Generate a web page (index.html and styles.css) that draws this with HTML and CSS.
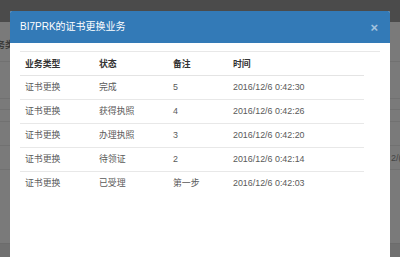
FILE: index.html
```html
<!DOCTYPE html>
<html lang="zh">
<head>
<meta charset="utf-8">
<link rel="stylesheet" href="styles.css">
</head>
<body>
<div class="page">
  <div class="topbar"></div>
  <div class="bg-content">
    <div class="bg-row bg-head"><span class="bg-left">务类</span></div>
    <div class="bg-row r37"></div>
    <div class="bg-row r11"></div>
    <div class="bg-row r12"></div>
    <div class="bg-row r24"></div>
    <div class="bg-row r24"><span class="bg-right">2/(</span></div>
    <div class="bg-fill"></div>
    <div class="bg-foot"></div>
  </div>
</div>
<div class="modal">
  <div class="modal-header">
    <span class="modal-title">BI7PRK的证书更换业务</span>
    <span class="close">×</span>
  </div>
  <div class="modal-body">
    <div class="table-wrap">
      <table class="table">
        <colgroup><col class="c1"><col class="c2"><col class="c3"><col></colgroup>
        <thead>
          <tr><th>业务类型</th><th>状态</th><th>备注</th><th>时间</th></tr>
        </thead>
        <tbody>
          <tr><td>证书更换</td><td>完成</td><td>5</td><td>2016/12/6 0:42:30</td></tr>
          <tr><td>证书更换</td><td>获得执照</td><td>4</td><td>2016/12/6 0:42:26</td></tr>
          <tr><td>证书更换</td><td>办理执照</td><td>3</td><td>2016/12/6 0:42:20</td></tr>
          <tr><td>证书更换</td><td>待领证</td><td>2</td><td>2016/12/6 0:42:14</td></tr>
          <tr><td>证书更换</td><td>已受理</td><td>第一步</td><td>2016/12/6 0:42:03</td></tr>
        </tbody>
      </table>
    </div>
  </div>
</div>
</body>
</html>
```
FILE: styles.css
```css
html, body {
  margin: 0;
  padding: 0;
  width: 400px;
  height: 257px;
  overflow: hidden;
  font-family: "Liberation Sans", "Noto Sans CJK SC", sans-serif;
}
.page {
  display: flex;
  flex-direction: column;
  height: 257px;
  background: #7a7a7a;
}
.topbar {
  height: 22px;
  background: #4b4b4b;
}
.bg-content {
  flex: 1;
  display: flex;
  flex-direction: column;
}
.bg-row {
  border-bottom: 1px solid #717171;
  font-size: 9px;
  color: #3a3a3a;
  flex: none;
}
.bg-head { height: 39px; }
.r37 { height: 36px; }
.r11 { height: 10px; }
.r12 { height: 11px; }
.r24 { height: 23px; }
.bg-left {
  display: block;
  padding-top: 17px;
  margin-left: -4px;
  font-weight: bold;
  line-height: 12px;
}
.bg-right {
  display: block;
  padding-top: 6px;
  padding-left: 391px;
  line-height: 12px;
  color: #444;
}
.bg-fill {
  flex: 1;
}
.bg-foot {
  height: 13px;
  background: #707070;
  border-top: 1px solid #6c6c6c;
}
.modal {
  position: absolute;
  left: 10px;
  top: 11px;
  width: 380px;
  height: 246px;
  background: #fff;
  border-radius: 2px 2px 0 0;
}
.modal-header {
  height: 32px;
  background: #337ab7;
  border-radius: 2px 2px 0 0;
  display: flex;
  align-items: center;
  justify-content: space-between;
  padding: 0 10px;
}
.modal-title {
  color: #fff;
  font-size: 10px;
  line-height: 14px;
}
.close {
  color: #fff;
  opacity: 0.55;
  font-weight: bold;
  font-size: 13px;
  line-height: 1;
  margin-right: 2px;
}
.modal-body {
  padding: 8px 10px;
}
.table-wrap {
  border-top: 1px solid #e8e8e8;
}
.table {
  width: 344px;
  border-collapse: collapse;
  font-size: 8.9px;
  color: #5a5a5a;
}
.c1 { width: 74px; }
.c2 { width: 74px; }
.c3 { width: 60px; }
.table th, .table td {
  text-align: left;
  padding: 3px 5px;
  line-height: 17px;
  font-weight: normal;
  white-space: nowrap;
}
.table th {
  font-weight: bold;
  color: #333;
  height: 17px;
  padding-top: 4px;
  padding-bottom: 2px;
  border-bottom: 1px solid #e4e4e4;
}
.table td {
  border-top: 1px solid #e8e8e8;
}
.table tbody tr:first-child td {
  border-top: none;
}
```
